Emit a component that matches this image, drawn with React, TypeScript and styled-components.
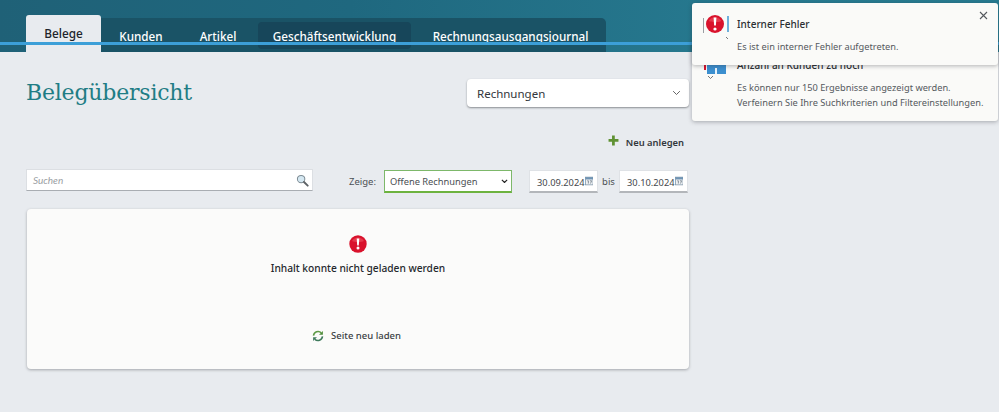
import React from 'react';
import styled, { createGlobalStyle } from 'styled-components';

const GlobalStyle = createGlobalStyle`
  html, body {
    margin: 0;
    padding: 0;
    background: #e8ebef;
    font-family: "Noto Sans", "Open Sans", sans-serif;
    color: #2a2e33;
    overflow: hidden;
  }
`;

const Page = styled.div`
  position: relative;
  width: 999px;
  height: 412px;
  overflow: hidden;
`;

const Header = styled.header`
  position: relative;
  height: 52px;
  box-sizing: border-box;
  padding: 15px 0 0 26px;
  background: linear-gradient(90deg, #1f6177 0%, #1f687f 35%, #277a90 75%, #277b91 100%);
`;

const BlueLine = styled.div`
  position: absolute;
  left: 0;
  right: 0;
  top: 42px;
  height: 3px;
  background: #3c9fd8;
`;

const Tabs = styled.nav`
  display: flex;
  align-items: flex-start;
  height: 37px;
`;

const ActiveTab = styled.a`
  width: 75px;
  height: 37px;
  box-sizing: border-box;
  padding-top: 10px;
  text-align: center;
  font-size: 11.8px;
  font-weight: 500;
  color: #20242a;
  background: #e8ebef;
  border-radius: 3px 3px 0 0;
`;

const TabRail = styled.div`
  display: flex;
  width: 505px;
  height: 34px;
  margin-top: 3px;
  box-sizing: border-box;
  padding: 4px 0 0 0;
  background: #1a5366;
  border-radius: 0 5px 0 0;
`;

const Tab = styled.a<{ $width: number; $marked?: boolean }>`
  flex: none;
  width: ${(p) => p.$width}px;
  height: 27px;
  margin-left: ${(p) => (p.$marked ? 3 : 0)}px;
  box-sizing: border-box;
  padding-top: 6px;
  text-align: center;
  font-size: 11.7px;
  font-weight: 500;
  color: #fff;
  white-space: nowrap;
  border-radius: 4px;
  background: ${(p) => (p.$marked ? '#17465a' : 'transparent')};
`;

const Main = styled.main`
  width: 663px;
  margin-left: 26px;
`;

const TitleRow = styled.div`
  display: flex;
  justify-content: space-between;
  align-items: flex-start;
  padding-top: 27px;
`;

const Title = styled.h1`
  margin: 0;
  font-family: "DejaVu Serif", "Liberation Serif", serif;
  font-weight: 400;
  font-size: 22px;
  line-height: 28px;
  letter-spacing: -0.2px;
  color: #1f7d85;
`;

const PageSelect = styled.div`
  display: flex;
  align-items: center;
  justify-content: space-between;
  width: 222px;
  height: 28px;
  box-sizing: border-box;
  padding: 0 8px 0 10px;
  font-size: 11.5px;
  color: #33373c;
  background: #fff;
  border-radius: 4px;
  box-shadow: 0 1px 2px rgba(60, 64, 70, 0.55);
`;

const ActionRow = styled.div`
  display: flex;
  justify-content: flex-end;
  align-items: center;
  gap: 7px;
  height: 20px;
  margin-top: 25px;
  padding-right: 5px;
  font-size: 9.4px;
  font-weight: 600;
  color: #33373c;
`;

const FilterRow = styled.div`
  display: flex;
  align-items: flex-start;
  margin-top: 17px;
  height: 24px;
`;

const SearchBox = styled.div`
  display: flex;
  align-items: center;
  justify-content: space-between;
  width: 287px;
  height: 22px;
  box-sizing: border-box;
  padding: 0 3px 0 6px;
  background: #fff;
  border: 1px solid #dcdfe3;
  border-bottom: 1.5px solid #a9adb2;
  font-family: Lato, "Noto Sans", sans-serif;
  font-style: italic;
  font-size: 10px;
  color: #9a9ea3;
`;

const FilterLabel = styled.span`
  margin: 0 8px 0 36px;
  padding-top: 6px;
  font-size: 9.5px;
  color: #4b4f54;
`;

const StatusSelect = styled.div`
  display: flex;
  align-items: center;
  justify-content: space-between;
  width: 128px;
  height: 23px;
  margin-top: 1px;
  margin-right: 17px;
  box-sizing: border-box;
  padding: 0 3px 0 5px;
  background: #fff;
  border: 1px solid #7db86a;
  border-bottom: 2px solid #6db33f;
  font-size: 9.3px;
  color: #4a4e53;
`;

const DateBox = styled.div`
  display: flex;
  justify-content: space-between;
  width: 69px;
  height: 23px;
  margin-top: 1px;
  box-sizing: border-box;
  padding: 0 4px 0 7px;
  background: #fff;
  border: 1px solid #dfe2e6;
  border-bottom: 2px solid #b3b6ba;
  font-size: 9.3px;
  line-height: 24px;
  color: #44484d;
`;

const CalendarSlot = styled.svg`
  margin-top: 5px;
`;

const BisLabel = styled.span`
  width: 21px;
  padding-top: 6px;
  text-align: center;
  font-size: 9.5px;
  color: #4b4f54;
`;

const ErrorCard = styled.section`
  display: flex;
  flex-direction: column;
  align-items: center;
  width: 662px;
  height: 160px;
  margin: 16px 0 0 1px;
  box-sizing: border-box;
  padding-top: 26px;
  background: #fbfbfa;
  border-radius: 4px;
  box-shadow: 0 1px 3px rgba(60, 64, 70, 0.4);
`;

const ErrorText = styled.p`
  margin: 7px 0 0;
  font-size: 10.2px;
  line-height: 16px;
  font-weight: 500;
  color: #25282c;
`;

const ReloadRow = styled.div`
  display: flex;
  align-items: center;
  gap: 7px;
  margin-top: 53px;
  padding-right: 3px;
  font-size: 9.5px;
  font-weight: 500;
  color: #3a3e43;
`;

const Toast = styled.aside<{ $top: number; $height: number; $layer: number }>`
  position: absolute;
  left: 692px;
  top: ${(p) => p.$top}px;
  width: 306px;
  height: ${(p) => p.$height}px;
  z-index: ${(p) => p.$layer};
  overflow: hidden;
  background: #fafaf8;
  border-radius: 3px;
  box-shadow: 0 1px 4px rgba(40, 44, 50, 0.35);
`;

const ToastIcon = styled.svg`
  position: absolute;
  left: 8px;
`;

const ToastTitle = styled.div`
  position: absolute;
  left: 45px;
  font-size: 10px;
  font-weight: 500;
  line-height: 16px;
  color: #2b2e32;
  white-space: nowrap;
`;

const ToastBody = styled.div`
  position: absolute;
  left: 45px;
  font-size: 9.25px;
  line-height: 14.5px;
  color: #55595e;
  white-space: nowrap;
`;

const CloseButton = styled.svg`
  position: absolute;
  right: 10px;
  top: 8px;
`;

const AlertIcon = ({ size = 18 }: { size?: number }) => (
  <svg width={size} height={size} viewBox="0 0 18 18">
    <circle cx="9" cy="9" r="8.7" fill="#d9122c" />
    <path d="M3 6a7 7 0 0 1 12 0c-3 1.5-9 1.5-12 0z" fill="#ef5a68" opacity="0.55" />
    <path d="M7.7 3.4h2.6l-.5 7H8.2z" fill="#fff" />
    <circle cx="9" cy="13" r="1.5" fill="#fff" />
  </svg>
);

const ChevronDown = ({ color = '#555', weight = 1.2, width = 9 }: { color?: string; weight?: number; width?: number }) => (
  <svg width={width} height={width * 0.67} viewBox="0 0 12 8">
    <path d="M1.5 1.5 6 6l4.5-4.5" fill="none" stroke={color} strokeWidth={weight} />
  </svg>
);

const PlusIcon = () => (
  <svg width="11" height="11" viewBox="0 0 12 12" style={{ marginTop: -3 }}>
    <path d="M4.4 0.5h3v3.9h4v3h-4v4h-3v-4H.6v-3h3.8z" fill="#5f9132" />
  </svg>
);

const SearchIcon = () => (
  <svg width="13" height="13" viewBox="0 0 14 14">
    <circle cx="5.5" cy="5.5" r="4" fill="#d5e8f2" stroke="#7d8b93" strokeWidth="1.1" />
    <path d="M8.6 8.6 12.6 12.6" stroke="#5d6266" strokeWidth="2" strokeLinecap="round" />
  </svg>
);

const CalendarIcon = () => (
  <CalendarSlot width="10" height="10" viewBox="0 0 11 11">
    <rect x="0.5" y="0.5" width="10" height="10" fill="#eef1f4" stroke="#7f95a8" />
    <rect x="0.5" y="0.5" width="10" height="3" fill="#6f93b3" />
    <path d="M3 5.2h1.4v3.6M6.4 5.2h2.2L7.2 8.8" fill="none" stroke="#4d5c68" strokeWidth="0.8" />
  </CalendarSlot>
);

const ReloadIcon = () => (
  <svg width="12" height="12" viewBox="0 0 13 13">
    <path d="M1.6 6A5 5 0 0 1 10 3" fill="none" stroke="#5d9a45" strokeWidth="1.7" />
    <path d="M11.8 1v4.2H7.6z" fill="#4f8c3a" />
    <path d="M11.4 7A5 5 0 0 1 3 10" fill="none" stroke="#3f7a5c" strokeWidth="1.7" />
    <path d="M1.2 12V7.8h4.2z" fill="#3f7a5c" />
  </svg>
);

const CloseIcon = () => (
  <CloseButton width="9" height="9" viewBox="0 0 9 9">
    <path d="M1 1l7 7M8 1 1 8" stroke="#55595e" strokeWidth="1.1" />
  </CloseButton>
);

export default function App() {
  return (
    <Page>
      <GlobalStyle />
      <Header>
        <Tabs>
          <ActiveTab>Belege</ActiveTab>
          <TabRail>
            <Tab $width={80}>Kunden</Tab>
            <Tab $width={74}>Artikel</Tab>
            <Tab $width={153} $marked>
              Geschäftsentwicklung
            </Tab>
            <Tab $width={199}>Rechnungsausgangsjournal</Tab>
          </TabRail>
        </Tabs>
        <BlueLine />
      </Header>

      <Main>
        <TitleRow>
          <Title>Belegübersicht</Title>
          <PageSelect>
            Rechnungen
            <ChevronDown />
          </PageSelect>
        </TitleRow>

        <ActionRow>
          <PlusIcon />
          Neu anlegen
        </ActionRow>

        <FilterRow>
          <SearchBox>
            Suchen
            <SearchIcon />
          </SearchBox>
          <FilterLabel>Zeige:</FilterLabel>
          <StatusSelect>
            Offene Rechnungen
            <ChevronDown color="#222" weight={2} width={7} />
          </StatusSelect>
          <DateBox>
            30.09.2024
            <CalendarIcon />
          </DateBox>
          <BisLabel>bis</BisLabel>
          <DateBox>
            30.10.2024
            <CalendarIcon />
          </DateBox>
        </FilterRow>

        <ErrorCard>
          <AlertIcon />
          <ErrorText>Inhalt konnte nicht geladen werden</ErrorText>
          <ReloadRow>
            <ReloadIcon />
            Seite neu laden
          </ReloadRow>
        </ErrorCard>
      </Main>

      <Toast $top={40} $height={81} $layer={1}>
        <ToastIcon style={{ top: 22 }} width="30" height="20" viewBox="0 0 30 20">
          <rect x="4" y="3" width="2" height="5" fill="#d9122c" />
          <rect x="7" y="3" width="19" height="9" fill="#3c8fcf" />
          <rect x="15" y="6" width="2" height="6" fill="#e8f2fa" />
          <path d="M8 14l2.5 2.5L13 14" fill="none" stroke="#555" strokeWidth="0.8" />
        </ToastIcon>
        <ToastTitle style={{ top: 17 }}>Anzahl an Kunden zu hoch</ToastTitle>
        <ToastBody style={{ top: 41 }}>
          Es können nur 150 Ergebnisse angezeigt werden.
          <br />
          Verfeinern Sie Ihre Suchkriterien und Filtereinstellungen.
        </ToastBody>
      </Toast>

      <Toast $top={3} $height={62} $layer={2}>
        <ToastIcon style={{ top: 11 }} width="36" height="30" viewBox="0 0 36 30">
          <rect x="3" y="4" width="1" height="15" fill="#9a9ea3" />
          <rect x="27" y="2" width="2" height="16" fill="#6fb0dc" />
          <path d="M26 23l2 2" stroke="#555" strokeWidth="0.8" />
          <circle cx="15" cy="10" r="9" fill="#d9122c" />
          <path d="M8.6 7a7.4 7.4 0 0 1 12.8 0c-3 1.6-9.8 1.6-12.8 0z" fill="#ef5a68" opacity="0.55" />
          <path d="M13.6 3.6h2.8l-.5 8h-1.8z" fill="#fff" />
          <circle cx="15" cy="15" r="1.6" fill="#fff" />
        </ToastIcon>
        <CloseIcon />
        <ToastTitle style={{ top: 13 }}>Interner Fehler</ToastTitle>
        <ToastBody style={{ top: 37 }}>Es ist ein interner Fehler aufgetreten.</ToastBody>
      </Toast>
    </Page>
  );
}
